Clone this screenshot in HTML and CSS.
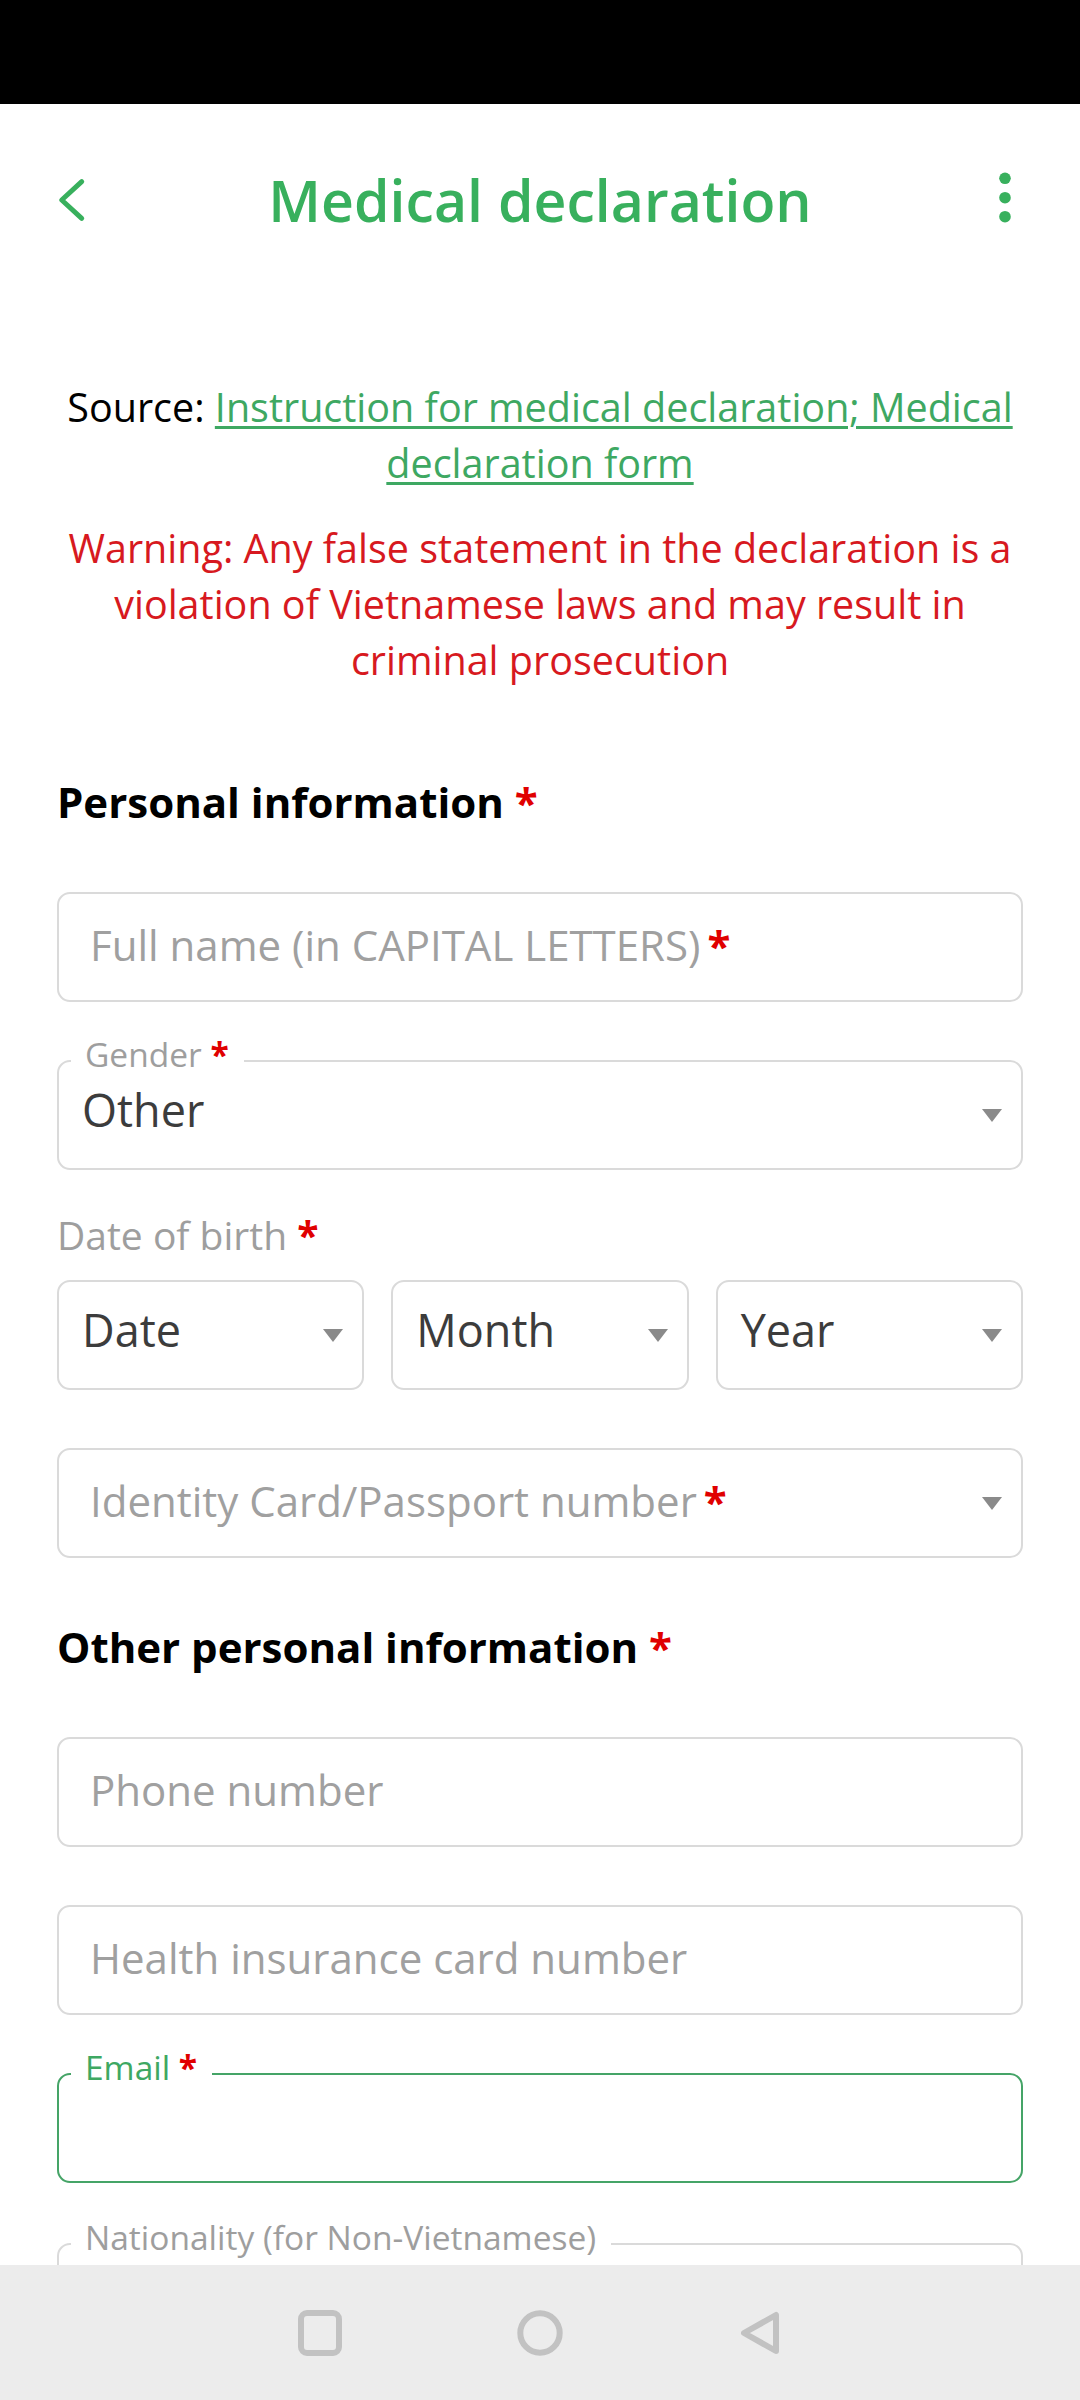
FILE: index.html
```html
<!DOCTYPE html>
<html lang="en">
<head>
<meta charset="utf-8">
<title>Medical declaration</title>
<link rel="stylesheet" href="styles.css">
</head>
<body>
<div class="screen">
  <div class="statusbar"></div>
  <main class="main">
    <header class="topbar">
      <svg class="back" width="30" height="48" viewBox="0 0 30 48" aria-hidden="true">
        <polyline points="25.7,5.7 5.7,24 25.7,42.3" fill="none" stroke="#38b05d" stroke-width="5" stroke-linecap="round" stroke-linejoin="round"/>
      </svg>
      <h1 class="title">Medical declaration</h1>
      <svg class="more" width="40" height="60" viewBox="0 0 40 60" aria-hidden="true">
        <circle cx="21" cy="8.3" r="5.8" fill="#38b05d"/>
        <circle cx="21" cy="27.7" r="5.8" fill="#38b05d"/>
        <circle cx="21" cy="46.7" r="5.8" fill="#38b05d"/>
      </svg>
    </header>

    <section class="intro">
      <p class="source">Source: <a class="source-link" href="#">Instruction for medical declaration; Medical declaration form</a></p>
      <p class="warning">Warning: Any false statement in the declaration is a violation of Vietnamese laws and may result in criminal prosecution</p>
    </section>

    <form class="form">
      <h2 class="section-title">Personal information <span class="req">*</span></h2>

      <div class="field field--input field--first">
        <span class="placeholder">Full name (in CAPITAL LETTERS)<span class="req req--inline">*</span></span>
      </div>

      <div class="field field--select">
        <span class="float-label">Gender <span class="req">*</span></span>
        <span class="value">Other</span>
        <svg class="caret" width="20" height="13" viewBox="0 0 20 13" aria-hidden="true"><polygon points="0,0 20,0 10,13" fill="#8a8a8a"/></svg>
      </div>

      <div class="dob-label">Date of birth <span class="req">*</span></div>
      <div class="dob-row">
        <div class="field field--select">
          <span class="value">Date</span>
          <svg class="caret" width="20" height="13" viewBox="0 0 20 13" aria-hidden="true"><polygon points="0,0 20,0 10,13" fill="#8a8a8a"/></svg>
        </div>
        <div class="field field--select">
          <span class="value">Month</span>
          <svg class="caret" width="20" height="13" viewBox="0 0 20 13" aria-hidden="true"><polygon points="0,0 20,0 10,13" fill="#8a8a8a"/></svg>
        </div>
        <div class="field field--select">
          <span class="value">Year</span>
          <svg class="caret" width="20" height="13" viewBox="0 0 20 13" aria-hidden="true"><polygon points="0,0 20,0 10,13" fill="#8a8a8a"/></svg>
        </div>
      </div>

      <div class="field field--input field--caret field--after-row">
        <span class="placeholder">Identity Card/Passport number<span class="req req--inline">*</span></span>
        <svg class="caret" width="20" height="13" viewBox="0 0 20 13" aria-hidden="true"><polygon points="0,0 20,0 10,13" fill="#8a8a8a"/></svg>
      </div>

      <h2 class="section-title section-title--second">Other personal information <span class="req">*</span></h2>

      <div class="field field--input field--first">
        <span class="placeholder">Phone number</span>
      </div>

      <div class="field field--input">
        <span class="placeholder">Health insurance card number</span>
      </div>

      <div class="field field--focused">
        <span class="float-label float-label--active">Email <span class="req">*</span></span>
      </div>

      <div class="field field--last">
        <span class="float-label">Nationality (for Non-Vietnamese)</span>
      </div>
    </form>
  </main>

  <nav class="navbar">
    <svg class="nav-icon" width="60" height="60" viewBox="0 0 60 60" aria-hidden="true">
      <rect x="11" y="10" width="38" height="40" rx="6" fill="none" stroke="#c2c2c2" stroke-width="6"/>
    </svg>
    <svg class="nav-icon" width="60" height="60" viewBox="0 0 60 60" aria-hidden="true">
      <circle cx="30" cy="30" r="19.7" fill="none" stroke="#c2c2c2" stroke-width="6"/>
    </svg>
    <svg class="nav-icon" width="60" height="60" viewBox="0 0 60 60" aria-hidden="true">
      <polygon points="14,30 46,12 46,48" fill="none" stroke="#c2c2c2" stroke-width="6" stroke-linejoin="round"/>
    </svg>
  </nav>
</div>
</body>
</html>
```

FILE: styles.css
```css
* {
  box-sizing: border-box;
}

html, body {
  margin: 0;
  padding: 0;
}

body {
  width: 1080px;
  height: 2400px;
  overflow: hidden;
  background: #ffffff;
  font-family: "Open Sans", "Noto Sans", sans-serif;
  color: #000;
}

.screen {
  display: flex;
  flex-direction: column;
  width: 1080px;
  height: 2400px;
}

.statusbar {
  flex: 0 0 104px;
  background: #000;
}

.main {
  flex: 1 1 auto;
  overflow: hidden;
  background: #fff;
}

/* Top bar */
.topbar {
  display: grid;
  grid-template-columns: 1fr auto 1fr;
  align-items: center;
  height: 76px;
  margin-top: 58px;
  padding: 0 56px;
}

.back {
  justify-self: start;
  display: block;
}

.more {
  justify-self: end;
  display: block;
}

.title {
  margin: 0;
  font-size: 57.2px;
  line-height: 76px;
  font-weight: 600;
  color: #38b05d;
  white-space: nowrap;
}

/* Intro */
.intro {
  padding: 0 57px;
  margin-top: 141px;
  text-align: center;
}

.source,
.warning {
  margin: 0;
  font-size: 39.5px;
  line-height: 56px;
}

.source {
  color: #000;
}

.source-link {
  color: #3ea862;
  text-decoration: underline;
  text-decoration-thickness: 3px;
  text-underline-offset: 4px;
}

.warning {
  margin-top: 29px;
  color: #d71920;
}

/* Form */
.form {
  padding: 0 57px;
  margin: 0;
}

.section-title {
  margin: 86px 0 0;
  font-size: 42px;
  line-height: 56px;
  font-weight: 700;
  color: #000;
}

.section-title--second {
  margin-top: 61px;
}

.req {
  color: #e00000;
  font-weight: 700;
}

.req--inline {
  margin-left: 7px;
}

.field {
  position: relative;
  display: flex;
  align-items: center;
  height: 110px;
  margin-top: 58px;
  border: 2px solid #dadada;
  border-radius: 13px;
  background: #fff;
}

.field--first {
  margin-top: 62px;
}

.field--input {
  padding: 0 28px 0 31px;
}

.field--select {
  padding: 0 19px 0 23px;
}

.field--caret {
  padding-right: 19px;
}

.field--focused {
  border-color: #45a467;
}

.field--last {
  margin-top: 60px;
}

.field--after-row {
  margin-top: 58px;
}

.placeholder {
  font-size: 42px;
  line-height: 56px;
  color: #a0a0a0;
  margin-bottom: 5px;
  white-space: nowrap;
}

.value {
  font-size: 45px;
  line-height: 56px;
  color: #3c3c3c;
  margin-bottom: 10px;
}

.caret {
  display: block;
  margin-left: auto;
  flex: 0 0 auto;
}

.float-label {
  position: absolute;
  top: -25px;
  left: 12px;
  padding: 0 15px 0 14px;
  background: #fff;
  font-size: 33.5px;
  line-height: 34px;
  color: #9e9e9e;
  white-space: nowrap;
}

.float-label--active {
  color: #3ea862;
}

.dob-label {
  margin-top: 37px;
  font-size: 39px;
  line-height: 56px;
  color: #9e9e9e;
}

.dob-row {
  display: grid;
  grid-template-columns: 307fr 297fr 307fr;
  column-gap: 27px;
  margin-top: 17px;
}

.dob-row .field {
  margin-top: 0;
}

/* Navigation bar */
.navbar {
  flex: 0 0 135px;
  display: flex;
  align-items: center;
  justify-content: center;
  gap: 160px;
  background: #ececec;
}

.nav-icon {
  display: block;
}
```
